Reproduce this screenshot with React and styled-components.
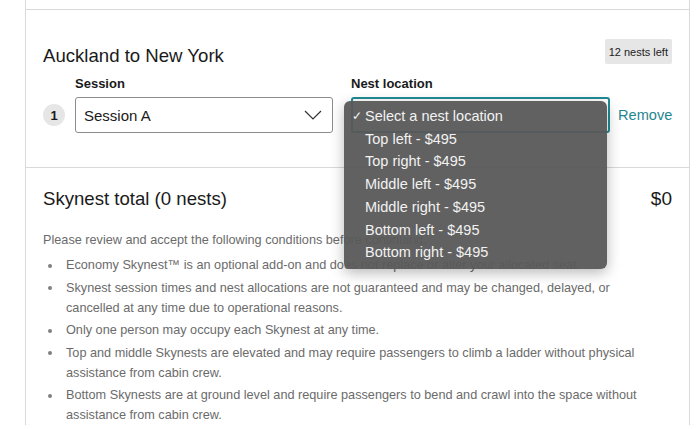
import React from "react";
import styled, { createGlobalStyle } from "styled-components";

const Global = createGlobalStyle`
  html, body { margin: 0; padding: 0; background: #fff; }
  body { font-family: "Liberation Sans", Arial, sans-serif; color: #1a1a1a; }
`;

const Page = styled.div`
  width: 700px;
  height: 429px;
  overflow: hidden;
  padding-left: 25px;
  box-sizing: border-box;
`;

const Card = styled.div`
  width: 665px;
  border-left: 1px solid #d9d9d9;
  border-right: 1px solid #d9d9d9;
  box-sizing: border-box;
`;

const TopStrip = styled.div`
  height: 9px;
  border-bottom: 1px solid #d9d9d9;
`;

const Section = styled.section`
  padding: ${(p) => p.$pad};
  border-bottom: ${(p) => (p.$line ? "1px solid #d9d9d9" : "none")};
`;

const HeaderRow = styled.div`
  display: flex;
  justify-content: space-between;
  align-items: flex-start;
`;

const Title = styled.h2`
  margin: ${(p) => p.$mt || 0}px 0 0;
  font-size: 18.6px;
  line-height: 22px;
  font-weight: 400;
  color: #1a1a1a;
`;

const Badge = styled.span`
  display: inline-flex;
  align-items: center;
  height: 25px;
  padding: 0 4px;
  background: #e6e6e6;
  border-radius: 2px;
  font-size: 11px;
  color: #222;
`;

const FieldRow = styled.div`
  display: flex;
  align-items: flex-end;
  margin-top: 9px;
`;

const Num = styled.span`
  flex-shrink: 0;
  width: 22px;
  height: 22px;
  border-radius: 50%;
  background: #e6e6e6;
  display: flex;
  align-items: center;
  justify-content: center;
  font-size: 13px;
  font-weight: 700;
  margin: 0 10px 7px 0;
`;

const Field = styled.div`
  position: relative;
  flex-shrink: 0;
  width: ${(p) => p.$w}px;
  margin-right: ${(p) => p.$mr || 0}px;
`;

const Label = styled.div`
  font-size: 13px;
  font-weight: 700;
  line-height: 16px;
  margin-bottom: 5px;
`;

const Select = styled.div`
  height: 36px;
  box-sizing: border-box;
  border: ${(p) => (p.$active ? "2px solid #1f8b95" : "1px solid #8c8c8c")};
  border-radius: 3px;
  display: flex;
  align-items: center;
  justify-content: space-between;
  padding: 0 10px 0 8px;
  font-size: 15px;
  color: #1a1a1a;
`;

const Remove = styled.span`
  flex-shrink: 0;
  color: #1f8790;
  font-size: 14.6px;
  margin: 0 0 10px -1px;
`;

const Menu = styled.ul`
  position: absolute;
  left: -7px;
  top: 25px;
  width: 263px;
  margin: 0;
  padding: 4px 0 5px;
  list-style: none;
  background: rgba(88, 88, 88, 0.95);
  border-radius: 6px;
  box-shadow: 0 4px 14px rgba(0, 0, 0, 0.28);
  z-index: 5;
`;

const Option = styled.li`
  position: relative;
  padding-left: 21px;
  font-size: 14.5px;
  line-height: 22.7px;
  color: #f2f2f2;
`;

const Check = styled.span`
  position: absolute;
  left: 8px;
  font-size: 12px;
`;

const Amount = styled.span`
  font-size: 19px;
  line-height: 22px;
  color: #1a1a1a;
`;

const Intro = styled.p`
  margin: 19px 0 4px;
  font-size: 12.7px;
  line-height: 22px;
  color: #6b6b6b;
  white-space: nowrap;
`;

const List = styled.ul`
  margin: 0;
  padding: 0 20px 0 0;
  list-style: none;
`;

const Item = styled.li`
  position: relative;
  padding-left: 23px;
  margin-bottom: 2.5px;
  font-size: 12.7px;
  line-height: 20px;
  color: #6b6b6b;
  &::before {
    content: "";
    position: absolute;
    left: 5px;
    top: 8.5px;
    width: 4px;
    height: 4px;
    border-radius: 50%;
    background: #808080;
  }
`;

const Chevron = () => (
  <svg width="18" height="10" viewBox="0 0 18 10" fill="none">
    <path d="M1 1l8 8 8-8" stroke="#333" strokeWidth="1.2" />
  </svg>
);

const options = [
  "Top left - $495",
  "Top right - $495",
  "Middle left - $495",
  "Middle right - $495",
  "Bottom left - $495",
  "Bottom right - $495",
];

const conditions = [
  "Economy Skynest™ is an optional add-on and does not replace or alter your allocated seat.",
  "Skynest session times and nest allocations are not guaranteed and may be changed, delayed, or cancelled at any time due to operational reasons.",
  "Only one person may occupy each Skynest at any time.",
  "Top and middle Skynests are elevated and may require passengers to climb a ladder without physical assistance from cabin crew.",
  "Bottom Skynests are at ground level and require passengers to bend and crawl into the space without assistance from cabin crew.",
];

export default function App() {
  return (
    <Page>
      <Global />
      <Card>
        <TopStrip />
        <Section $pad="29px 17px 34px" $line>
          <HeaderRow>
            <Title $mt={6}>Auckland to New York</Title>
            <Badge>12 nests left</Badge>
          </HeaderRow>
          <FieldRow>
            <Num>1</Num>
            <Field $w={258} $mr={18}>
              <Label>Session</Label>
              <Select>
                Session A
                <Chevron />
              </Select>
            </Field>
            <Field $w={259} $mr={9}>
              <Label>Nest location</Label>
              <Select $active />
              <Menu>
                <Option>
                  <Check>✓</Check>Select a nest location
                </Option>
                {options.map((o) => (
                  <Option key={o}>{o}</Option>
                ))}
              </Menu>
            </Field>
            <Remove>Remove</Remove>
          </FieldRow>
        </Section>
        <Section $pad="20px 17px 0">
          <HeaderRow>
            <Title>Skynest total (0 nests)</Title>
            <Amount>$0</Amount>
          </HeaderRow>
          <Intro>Please review and accept the following conditions before continuing.</Intro>
          <List>
            {conditions.map((c) => (
              <Item key={c}>{c}</Item>
            ))}
          </List>
        </Section>
      </Card>
    </Page>
  );
}
